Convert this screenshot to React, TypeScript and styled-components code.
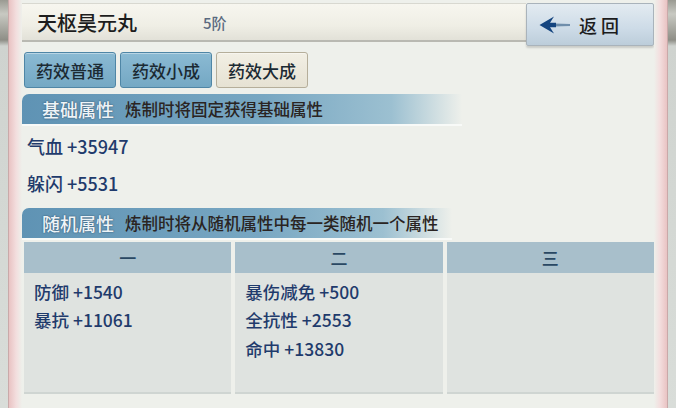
import styled, { createGlobalStyle } from "styled-components";

const GlobalStyle = createGlobalStyle`
  html, body {
    margin: 0;
    padding: 0;
    background: #d9dedb;
  }
  * { box-sizing: border-box; }
`

const Frame = styled.div`
  width: 676px;
  height: 408px;
  display: flex;
  font-family: "Noto Sans CJK SC", "Noto Sans", sans-serif;
  overflow: hidden;
`

const Rod = styled.div`
  width: 8px;
  background: linear-gradient(180deg, #9a9a92 0px, #c8c9c2 14px, #8e8e86 40px, #cfd3cf 46px, #d9ddd9 100%);
`

const Edge = styled.div<{ $right?: boolean }>`
  width: 14px;
  background: linear-gradient(${p => p.$right ? "270deg" : "90deg"}, #e9c3c3 0%, #f3dede 55%, #eef0eb 100%);
  border-${p => p.$right ? "right" : "left"}: 1px solid #c9a9a9;
`

const Panel = styled.div`
  flex: 1;
  display: flex;
  flex-direction: column;
  background: #eef0eb;
  padding: 3px 0 0 0;
`

const TopBar = styled.div`
  display: flex;
  height: 43px;
`

const TitleBar = styled.div`
  flex: 1;
  height: 39px;
  display: flex;
  align-items: center;
  padding-left: 15px;
  background: linear-gradient(180deg, #f7f6ef 0%, #efeee5 60%, #e2e1d8 100%);
  border-bottom: 2px solid #b9b9b2;
  border-top: 1px solid #d8d8d0;
`

const Title = styled.span`
  font-size: 20px;
  font-weight: 500;
  color: #1d1d1d;
  width: 166px;
`

const Grade = styled.span`
  font-size: 15px;
  font-weight: 500;
  color: #5a6a80;
`

const BackButton = styled.div`
  width: 128px;
  height: 43px;
  display: flex;
  align-items: center;
  gap: 8px;
  padding-left: 12px;
  background: linear-gradient(180deg, #e3ebf1 0%, #cddbe7 60%, #bccdda 100%);
  border: 1px solid #a9b3bb;
  border-radius: 2px;
  box-shadow: 0 2px 2px rgba(0,0,0,0.15);
  font-size: 18px;
  font-weight: 500;
  color: #1c1c1c;
  letter-spacing: 4px;
`

const Tabs = styled.div`
  display: flex;
  gap: 4px;
  padding: 6px 0 0 2px;
`

const Tab = styled.div<{ $active?: boolean }>`
  width: 92px;
  height: 36px;
  display: flex;
  align-items: center;
  justify-content: center;
  font-size: 17px;
  font-weight: 500;
  color: #1b2a33;
  border-radius: 3px;
  border: 1px solid ${p => p.$active ? "#b5ae9a" : "#4f86a6"};
  background: ${p => p.$active
    ? "linear-gradient(180deg, #f2efe4 0%, #e6e2d3 100%)"
    : "linear-gradient(180deg, #8bbad3 0%, #74a8c4 100%)"};
  box-shadow: inset 0 1px 0 rgba(255,255,255,0.4);
`

const SectionHeader = styled.div<{ $width: number }>`
  width: ${p => p.$width}px;
  height: 32px;
  margin-top: 6px;
  display: flex;
  align-items: center;
  gap: 11px;
  padding-left: 20px;
  border-radius: 7px 0 0 0;
  background: linear-gradient(90deg, #5f93b4 0%, #78a7c2 55%, #9cc0d1 84%, rgba(200,220,228,0) 100%);
  border-bottom: 2px solid #f8faf8;
`

const SectionName = styled.span`
  font-size: 18px;
  font-weight: 500;
  color: #eef4f8;
  text-shadow: 0 0 2px #3b5f7a, 0 0 1px #3b5f7a;
`

const SectionNote = styled.span`
  font-size: 16.5px;
  font-weight: 500;
  color: #2a2422;
`

const BaseStats = styled.div`
  padding: 1px 0 1px;
`

const Stat = styled.div`
  font-size: 18px;
  font-weight: 500;
  color: #1f3b6c;
  padding-left: 5px;
  height: 37px;
  display: flex;
  align-items: center;
`

const Table = styled.div`
  display: grid;
  grid-template-columns: repeat(3, 1fr);
  gap: 4px;
  margin: 2px 0 0 2px;
  height: 152px;
`

const Column = styled.div`
  display: flex;
  flex-direction: column;
  background: #dfe3e0;
  border-bottom: 2px solid #cfd5d2;
`

const ColumnHead = styled.div`
  height: 31px;
  display: flex;
  align-items: center;
  justify-content: center;
  background: #a8bfcb;
  font-size: 17px;
  font-weight: 500;
  color: #2a4863;
`

const ColumnBody = styled.div`
  padding: 4px 10px;
  display: flex;
  flex-direction: column;
`

const Entry = styled.div`
  font-size: 17.5px;
  font-weight: 500;
  color: #1f3b6c;
  height: 28.5px;
  display: flex;
  align-items: center;
`

function BackArrow() {
  return (
    <svg width="32" height="20" viewBox="0 0 32 20">
      <path d="M15 8.6 L31 8.9 L31 11.1 L15 11.4 Z" fill="#6f8eab" />
      <path d="M0.5 10 L15 1.5 L11 7.8 L17 7.8 L17 12.2 L11 12.2 L15 18.5 Z" fill="#15457f" />
    </svg>
  )
}

const columns = [
  { head: "一", items: ["防御 +1540", "暴抗 +11061"] },
  { head: "二", items: ["暴伤减免 +500", "全抗性 +2553", "命中 +13830"] },
  { head: "三", items: [] as string[] },
]

function App() {
  return (
    <>
      <GlobalStyle />
      <Frame>
        <Rod />
        <Edge />
        <Panel>
          <TopBar>
            <TitleBar>
              <Title>天枢昊元丸</Title>
              <Grade>5阶</Grade>
            </TitleBar>
            <BackButton>
              <BackArrow />
              <span>返回</span>
            </BackButton>
          </TopBar>
          <Tabs>
            <Tab>药效普通</Tab>
            <Tab>药效小成</Tab>
            <Tab $active>药效大成</Tab>
          </Tabs>
          <SectionHeader $width={440}>
            <SectionName>基础属性</SectionName>
            <SectionNote>炼制时将固定获得基础属性</SectionNote>
          </SectionHeader>
          <BaseStats>
            <Stat>气血 +35947</Stat>
            <Stat>躲闪 +5531</Stat>
          </BaseStats>
          <SectionHeader $width={430}>
            <SectionName>随机属性</SectionName>
            <SectionNote>炼制时将从随机属性中每一类随机一个属性</SectionNote>
          </SectionHeader>
          <Table>
            {columns.map(col => (
              <Column key={col.head}>
                <ColumnHead>{col.head}</ColumnHead>
                <ColumnBody>
                  {col.items.map(item => <Entry key={item}>{item}</Entry>)}
                </ColumnBody>
              </Column>
            ))}
          </Table>
        </Panel>
        <Edge $right />
        <Rod />
      </Frame>
    </>
  );
}

export default App;
